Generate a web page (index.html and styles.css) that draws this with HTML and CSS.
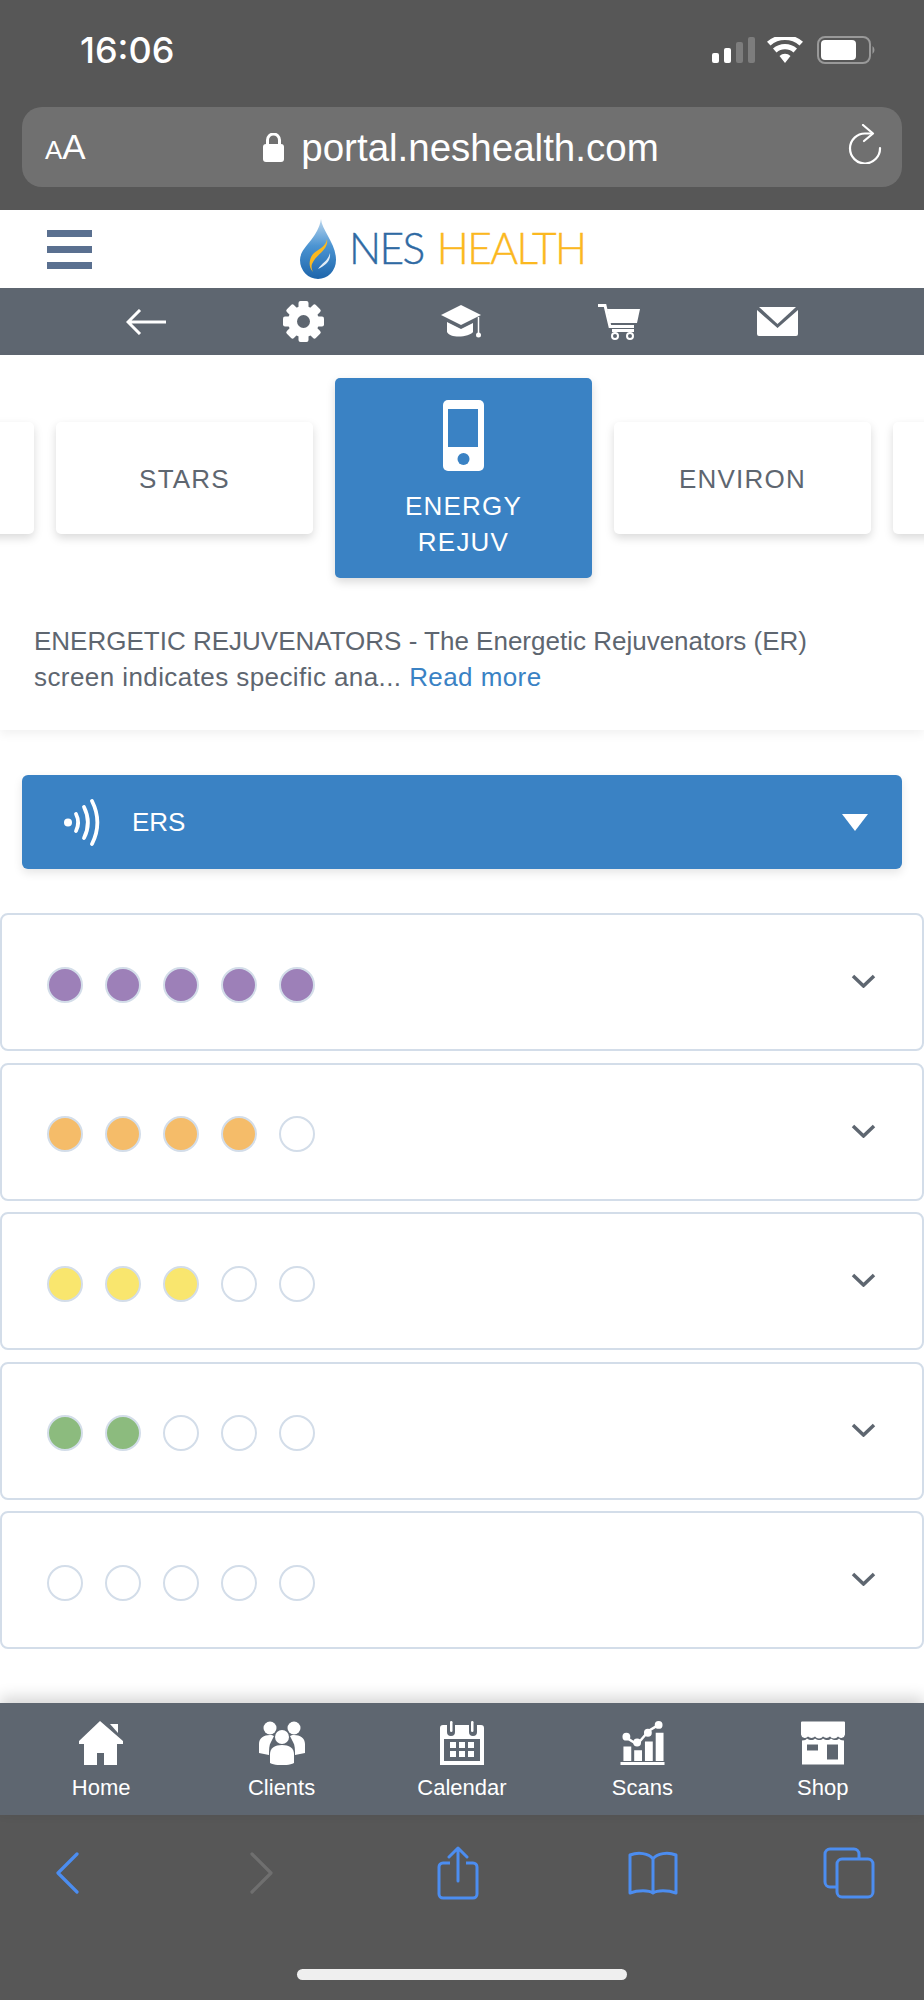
FILE: index.html
```html
<!DOCTYPE html>
<html lang="en">
<head>
  <meta charset="UTF-8">
  <title>NES Health Portal</title>
  <meta name="viewport" content="width=device-width, initial-scale=1.0">
  <link rel="stylesheet" href="styles.css">
</head>
<body>
  <div class="page">
    <!-- safari top chrome -->
    <div class="safari-top">
      <div class="status-bar">
        <span class="clock">16:06</span>
        <div class="status-icons">
          <svg width="43" height="26" viewBox="0 0 43 26"><rect x="0" y="16" width="7" height="10" rx="2" fill="#fff"/><rect x="12" y="11" width="7" height="15" rx="2" fill="#fff"/><rect x="24" y="5" width="7" height="21" rx="2" fill="#7d7d7d"/><rect x="36" y="0" width="7" height="26" rx="2" fill="#7d7d7d"/></svg>
          <svg width="36" height="26" viewBox="0 0 36 26"><path d="M18 26l-5.500-7a8 8 0 0 1 11 0zM9.500 15.500l-3.500-4a18 18 0 0 1 24 0l-3.500 4a13 13 0 0 0-17 0zM3.500 8.500L0 4.800a27 27 0 0 1 36 0l-3.500 3.700a22 22 0 0 0-29 0z" fill="#fff"/></svg>
          <svg class="battery" width="58" height="28" viewBox="0 0 58 28"><rect x="1" y="1" width="52" height="26" rx="7" fill="none" stroke="#999" stroke-width="2"/><rect x="4" y="4" width="35" height="20" rx="4" fill="#fff"/><path d="M55.500 10a5 5 0 0 1 0 8z" fill="#999"/></svg>
        </div>
      </div>
      <div class="url-bar">
        <span class="aa"><small>A</small>A</span>
        <div class="url">
          <svg width="21" height="29" viewBox="0 0 21 29"><rect x="0" y="11" width="21" height="18" rx="3" fill="#fff"/><path d="M4.500 12V7a6 6 0 0 1 12 0v5" fill="none" stroke="#fff" stroke-width="3"/></svg>
          <span>portal.neshealth.com</span>
        </div>
        <svg class="reload" width="34" height="40" viewBox="0 0 34 40"><path d="M24 9.500H17.500A15 15 0 1 0 32 24" fill="none" stroke="#fff" stroke-width="2.200" stroke-linecap="round"/><path d="M15 1l10 8.500L16 17" fill="none" stroke="#fff" stroke-width="2.200" stroke-linecap="round" stroke-linejoin="round"/></svg>
      </div>
    </div>

    <header class="site-header">
      <div class="hamburger"><i></i><i></i><i></i></div>
      <div class="logo">
        <svg width="36" height="60" viewBox="0 0 36 60">
          <defs>
            <linearGradient id="drop" x1="0" y1="0" x2="0" y2="1"><stop offset="0" stop-color="#bcd7ee"/><stop offset=".45" stop-color="#4b94d2"/><stop offset="1" stop-color="#1d65ab"/></linearGradient>
          </defs>
          <path d="M21 0c1 12 15 24 15 41a18 19 0 0 1-36 0C0 28 18 20 21 0z" fill="url(#drop)"/>
          <path d="M27 20c2 11-11 15-15 25-1 3 0 6 1 8-5-5-4-13 0-18 5-5 13-7 14-15z" fill="#fbb81f"/>
          <path d="M30 34c1 9-6 13-12 16 4-6 10-8 12-16z" fill="#fff" opacity=".85"/>
        </svg>
        <span class="logo-text"><span class="nes">NES</span> <span class="health">HEALTH</span></span>
      </div>
    </header>

    <nav class="tool-bar">
      <svg width="40" height="26" viewBox="0 0 40 26"><path d="M14 1L2 13l12 12M2 13h38" fill="none" stroke="#fff" stroke-width="3"/></svg>
      <svg width="41" height="41" viewBox="0 0 41 41">
        <g fill="#fff">
          <rect x="15.500" y="0" width="10" height="41" rx="2"/>
          <rect x="15.500" y="0" width="10" height="41" rx="2" transform="rotate(45 20.500 20.500)"/>
          <rect x="15.500" y="0" width="10" height="41" rx="2" transform="rotate(90 20.500 20.500)"/>
          <rect x="15.500" y="0" width="10" height="41" rx="2" transform="rotate(135 20.500 20.500)"/>
          <circle cx="20.500" cy="20.500" r="15.500"/>
        </g>
        <circle cx="20.500" cy="20.500" r="6.500" fill="#5e6670"/>
      </svg>
      <svg width="41" height="34" viewBox="0 0 41 34"><path d="M20 0l20 10-20 10L0 10z" fill="#fff"/><path d="M6 17l14 7 12-6v9c-3 5-23 7-26 0z" fill="#fff"/><path d="M37.500 12v16" stroke="#fff" stroke-width="1.500"/><circle cx="37.500" cy="30" r="2.500" fill="#fff"/></svg>
      <svg width="42" height="36" viewBox="0 0 42 36"><path d="M0 1.500h7l5 21h24" fill="none" stroke="#fff" stroke-width="3"/><path d="M9 5h33l-3 14H12z" fill="#fff"/><path d="M14 25h22v3H14z" fill="#fff"/><circle cx="17" cy="32" r="3" fill="none" stroke="#fff" stroke-width="2"/><circle cx="32" cy="32" r="3" fill="none" stroke="#fff" stroke-width="2"/></svg>
      <svg width="41" height="29" viewBox="0 0 41 29"><path d="M2 0h37L20.500 17z" fill="#fff"/><path d="M0 3l20.500 18L41 3v24a2 2 0 0 1-2 2H2a2 2 0 0 1-2-2z" fill="#fff"/></svg>
    </nav>

    <section class="intro">
      <div class="tabs">
        <div class="tab"></div>
        <div class="tab"><span>STARS</span></div>
        <div class="tab active">
          <svg width="41" height="71" viewBox="0 0 41 71"><rect width="41" height="71" rx="5" fill="#fff"/><rect x="5" y="9" width="30" height="38" fill="#3a82c4"/><circle cx="20.500" cy="59" r="6" fill="#3a82c4"/></svg>
          <span>ENERGY<br>REJUV</span>
        </div>
        <div class="tab"><span>ENVIRON</span></div>
        <div class="tab"></div>
      </div>
      <p class="desc">ENERGETIC REJUVENATORS - The Energetic Rejuvenators (ER) <span class="desc-tail">screen indicates specific ana... <a href="#">Read more</a></span></p>
    </section>

    <div class="select-bar">
      <svg width="37" height="47" viewBox="0 0 37 47"><circle cx="4" cy="23.500" r="4" fill="#fff"/><g fill="none" stroke="#fff" stroke-width="3.800" stroke-linecap="round"><path d="M12 15c3 6 3 11 0 17"/><path d="M20 8c5 10 5 21 0 31"/><path d="M28 2c7 14 7 29 0 43"/></g></svg>
      <span>ERS</span>
      <div class="caret"></div>
    </div>

    <div class="rows">
      <div class="row">
        <div class="dots"><i class="purple"></i><i class="purple"></i><i class="purple"></i><i class="purple"></i><i class="purple"></i></div>
        <svg class="chev" width="25" height="14" viewBox="0 0 25 14"><path d="M2 2l10.500 10L23 2" fill="none" stroke="#5e6670" stroke-width="3.500"/></svg>
      </div>
      <div class="row">
        <div class="dots"><i class="orange"></i><i class="orange"></i><i class="orange"></i><i class="orange"></i><i></i></div>
        <svg class="chev" width="25" height="14" viewBox="0 0 25 14"><path d="M2 2l10.500 10L23 2" fill="none" stroke="#5e6670" stroke-width="3.500"/></svg>
      </div>
      <div class="row">
        <div class="dots"><i class="yellow"></i><i class="yellow"></i><i class="yellow"></i><i></i><i></i></div>
        <svg class="chev" width="25" height="14" viewBox="0 0 25 14"><path d="M2 2l10.500 10L23 2" fill="none" stroke="#5e6670" stroke-width="3.500"/></svg>
      </div>
      <div class="row">
        <div class="dots"><i class="green"></i><i class="green"></i><i></i><i></i><i></i></div>
        <svg class="chev" width="25" height="14" viewBox="0 0 25 14"><path d="M2 2l10.500 10L23 2" fill="none" stroke="#5e6670" stroke-width="3.500"/></svg>
      </div>
      <div class="row">
        <div class="dots"><i></i><i></i><i></i><i></i><i></i></div>
        <svg class="chev" width="25" height="14" viewBox="0 0 25 14"><path d="M2 2l10.500 10L23 2" fill="none" stroke="#5e6670" stroke-width="3.500"/></svg>
      </div>
    </div>

    <nav class="bottom-nav">
      <div class="nav-item">
        <svg width="44" height="44" viewBox="0 0 44 44"><path d="M21 0L0 20v3h5v21h13V32h7v12h13V23h6v-3z" fill="#fff"/><path d="M31 3h8v9z" fill="#fff"/></svg>
        <span>Home</span>
      </div>
      <div class="nav-item">
        <svg width="46" height="44" viewBox="0 0 46 44"><circle cx="11" cy="7" r="6.500" fill="#fff"/><circle cx="35" cy="7" r="6.500" fill="#fff"/><path d="M0 32v-9c0-6 5-9 11-9 2 0 3 .5 4 1l-3 6c-2 3-2 8-2 13zM46 32v-9c0-6-5-9-11-9-2 0-3 .5-4 1l3 6c2 3 2 8 2 13z" fill="#fff"/><circle cx="23" cy="16" r="7" fill="#fff"/><path d="M11 42V33c0-6 5-9 12-9s12 3 12 9v9c-6 3-18 3-24 0z" fill="#fff"/></svg>
        <span>Clients</span>
      </div>
      <div class="nav-item">
        <svg width="44" height="44" viewBox="0 0 44 44"><path fill-rule="evenodd" d="M3 4h4v7a4 4 0 0 0 4 4h0a4 4 0 0 0 4-4V4h14v7a4 4 0 0 0 4 4h0a4 4 0 0 0 4-4V4h4a3 3 0 0 1 3 3v37H0V7a3 3 0 0 1 3-3zM4 18v22h36V18z" fill="#fff"/><rect x="10" y="0" width="2.500" height="11" rx="1.200" fill="#fff"/><rect x="31" y="0" width="2.500" height="11" rx="1.200" fill="#fff"/><path d="M10 21h6v6h-6zM19 21h6v6h-6zM28 21h6v6h-6zM10 30h6v6h-6zM19 30h6v6h-6zM28 30h6v6h-6z" fill="#fff"/></svg>
        <span>Calendar</span>
      </div>
      <div class="nav-item">
        <svg width="45" height="45" viewBox="0 0 45 45"><path d="M0 42h45v3H0zM3 26h8v15H3zM14 30h8v11h-8zM25 21h8v20h-8zM36 12h8v29h-8z" fill="#fff"/><path d="M6 17l11 7 12-14 10-6" fill="none" stroke="#fff" stroke-width="2.500"/><circle cx="6" cy="16" r="4" fill="#fff"/><circle cx="17" cy="22" r="4" fill="#fff"/><circle cx="28" cy="12" r="4" fill="#fff"/><circle cx="39" cy="4" r="4" fill="#fff"/></svg>
        <span>Scans</span>
      </div>
      <div class="nav-item">
        <svg width="44" height="43" viewBox="0 0 44 43"><path d="M1 0h42a1 1 0 0 1 1 1v12a4 4 0 0 1-7 2 5 5 0 0 1-8 0 5 5 0 0 1-7 0 5 5 0 0 1-8 0 5 5 0 0 1-7 0 4 4 0 0 1-7-2V1a1 1 0 0 1 1-1z" fill="#fff"/><path fill-rule="evenodd" d="M1 19c3 0 4-1 5-2 3 2 6 2 8 0 3 2 6 2 8 0 3 2 6 2 8 0 3 2 6 2 8 0 1 1 2 2 5 2v24H1zM6 23v6h11v-6zM26 23v15h11V23z" fill="#fff"/></svg>
        <span>Shop</span>
      </div>
    </nav>

    <!-- safari bottom chrome -->
    <div class="safari-bottom">
      <div class="safari-tools">
        <svg class="t-back" width="24" height="42" viewBox="0 0 24 42"><path d="M22 2L3 21l19 19" fill="none" stroke="#4c8df0" stroke-width="3.200" stroke-linecap="round" stroke-linejoin="round"/></svg>
        <svg class="t-fwd" width="24" height="42" viewBox="0 0 24 42"><path d="M2 2l19 19L2 40" fill="none" stroke="#6f6f6f" stroke-width="3.200" stroke-linecap="round" stroke-linejoin="round"/></svg>
        <svg class="t-share" width="42" height="54" viewBox="0 0 42 54"><path d="M13 17H6a4 4 0 0 0-4 4v27a4 4 0 0 0 4 4h30a4 4 0 0 0 4-4V21a4 4 0 0 0-4-4h-7" fill="none" stroke="#4c8df0" stroke-width="3"/><path d="M21 35V2M12 11l9-9 9 9" fill="none" stroke="#4c8df0" stroke-width="3" stroke-linecap="round" stroke-linejoin="round"/></svg>
        <svg class="t-book" width="50" height="44" viewBox="0 0 50 44"><path d="M25 8C21 2 10 1 2 4v38c8-3 19-3 23 0 4-3 15-3 23 0V4C40 1 29 2 25 8zM25 8v34" fill="none" stroke="#4c8df0" stroke-width="3" stroke-linejoin="round"/></svg>
        <svg class="t-tabs" width="52" height="52" viewBox="0 0 52 52"><path d="M13 40H7a5 5 0 0 1-5-5V7a5 5 0 0 1 5-5h24a5 5 0 0 1 5 5v5" fill="none" stroke="#4c8df0" stroke-width="3"/><rect x="14" y="12" width="36" height="38" rx="5" fill="none" stroke="#4c8df0" stroke-width="3"/></svg>
      </div>
      <div class="home-indicator"></div>
    </div>
  </div>
</body>
</html>
```

FILE: styles.css
```css
body {
  margin: 0;
  padding: 0;
  font-family: "Liberation Sans", Arial, sans-serif;
  color: #5e6670;
  background: #fff;
}
.page {
  width: 924px;
  height: 2000px;
  display: flex;
  flex-direction: column;
  overflow: hidden;
}

/* safari top */
.safari-top {
  height: 210px;
  background: #575757;
  color: #fff;
  box-sizing: border-box;
  padding: 0 22px;
}
.status-bar {
  height: 107px;
  display: flex;
  justify-content: space-between;
  align-items: flex-start;
  padding: 32px 27px 0 58px;
  box-sizing: border-box;
}
.clock {
  font-family: Inter, "Liberation Sans", sans-serif;
  font-size: 36px;
  font-weight: 500;
  line-height: 37px;
}
.status-icons {
  display: flex;
  align-items: center;
  gap: 12px;
  padding-top: 4px;
}
.battery {
  margin-left: 2px;
}
.url-bar {
  height: 80px;
  background: #707070;
  border-radius: 20px;
  display: flex;
  align-items: center;
  justify-content: space-between;
  padding: 0 20px 0 23px;
}
.aa {
  font-size: 35px;
  width: 43px;
  white-space: nowrap;
}
.aa small {
  font-size: 26px;
}
.url {
  display: flex;
  align-items: center;
  gap: 17px;
  font-size: 38.500px;
  margin-left: -14px;
  padding-top: 1px;
}
.reload {
  margin-top: -7px;
}

/* site header */
.site-header {
  height: 78px;
  display: flex;
  align-items: center;
  padding-left: 47px;
  background: #fff;
}
.hamburger {
  width: 45px;
  margin-right: 208px;
  display: flex;
  flex-direction: column;
  gap: 9px;
}
.hamburger i {
  display: block;
  height: 7px;
  background: #5a7090;
}
.logo {
  display: flex;
  align-items: center;
  gap: 13px;
}
.logo-text {
  font-family: Lato, "Liberation Sans", sans-serif;
  font-weight: 300;
  font-size: 42.500px;
  letter-spacing: -1.600px;
  word-spacing: 3px;
  -webkit-text-stroke: 0.4px currentColor;
  white-space: nowrap;
  margin-top: -4px;
}
.nes {
  color: #2f6aa3;
}
.health {
  color: #fbb81f;
}
.tool-bar {
  height: 67px;
  background: #5e6670;
  display: flex;
  align-items: center;
  padding: 0 126px;
  justify-content: space-between;
}

/* tabs + description */
.intro {
  height: 375px;
  box-sizing: border-box;
  padding-top: 23px;
  box-shadow: 0 4px 10px rgba(0, 0, 0, 0.06);
  position: relative;
}
.tabs {
  display: flex;
  justify-content: center;
  align-items: center;
  gap: 22px;
  height: 200px;
  padding-left: 3px;
}
.tab {
  flex: 0 0 257px;
  height: 112px;
  background: #fff;
  border-radius: 5px;
  box-shadow: 0 4px 10px rgba(0, 0, 0, 0.15);
  font-size: 26px;
  letter-spacing: 1.200px;
  display: flex;
  align-items: center;
  justify-content: center;
  text-align: center;
}
.tab span {
  padding-top: 3px;
}
.tab.active {
  height: 200px;
  background: #3a82c4;
  color: #fff;
  flex-direction: column;
  justify-content: flex-start;
  padding-top: 22px;
  box-sizing: border-box;
}
.tab.active span {
  line-height: 36px;
  margin-top: 17px;
  padding-top: 0;
}
.desc {
  margin: 45px 70px 0 34px;
  font-size: 26px;
  line-height: 36px;
}
.desc-tail {
  letter-spacing: 0.420px;
}
.desc a {
  color: #3a82c4;
  text-decoration: none;
}

/* ERS select */
.select-bar {
  height: 94px;
  margin: 45px 22px 0;
  background: #3a82c4;
  border-radius: 6px;
  color: #fff;
  font-size: 26px;
  display: flex;
  align-items: center;
  padding: 0 34px 0 42px;
  box-shadow: 0 4px 10px rgba(0, 0, 0, 0.1);
}
.select-bar span {
  margin-left: 31px;
}
.caret {
  margin-left: auto;
  border-left: 13px solid transparent;
  border-right: 13px solid transparent;
  border-top: 17px solid #fff;
}

/* accordion rows */
.rows {
  margin-top: 44px;
  display: flex;
  flex-direction: column;
  gap: 11.500px;
}
.row {
  height: 138px;
  box-sizing: border-box;
  border: 2px solid #d3dde9;
  border-radius: 8px;
  display: flex;
  align-items: center;
  justify-content: space-between;
  padding: 5px 46px 0 45px;
}
.dots {
  display: flex;
  gap: 22px;
}
.dots i {
  display: block;
  width: 36px;
  height: 36px;
  box-sizing: border-box;
  border: 2px solid #d3dde9;
  border-radius: 50%;
}
.dots .purple { background: #9d80b8; }
.dots .orange { background: #f5bc69; }
.dots .yellow { background: #f9e66e; }
.dots .green { background: #8cbb7e; }
.chev {
  margin-top: -7px;
}

/* bottom nav */
.bottom-nav {
  margin-top: auto;
  height: 112px;
  background: #5e6670;
  display: grid;
  grid-template-columns: repeat(5, 1fr);
  padding: 0 11px;
  box-shadow: 0 -6px 14px rgba(0, 0, 0, 0.16);
  position: relative;
}
.nav-item {
  display: flex;
  flex-direction: column;
  align-items: center;
  color: #fff;
  font-size: 22px;
  padding-top: 18px;
}
.nav-item svg {
  height: 44px;
}
.nav-item span {
  margin-top: 10px;
}

/* safari bottom */
.safari-bottom {
  height: 185px;
  background: #575757;
  display: flex;
  flex-direction: column;
}
.safari-tools {
  height: 116px;
  padding-left: 55px;
  display: flex;
  align-items: center;
}
.t-fwd { margin-left: 171px; }
.t-share { margin-left: 163px; }
.t-book { margin-left: 149px; }
.t-tabs { margin-left: 145px; }
.home-indicator {
  width: 330px;
  height: 11px;
  margin: 38px auto 0;
  border-radius: 6px;
  background: #efefef;
}
```
